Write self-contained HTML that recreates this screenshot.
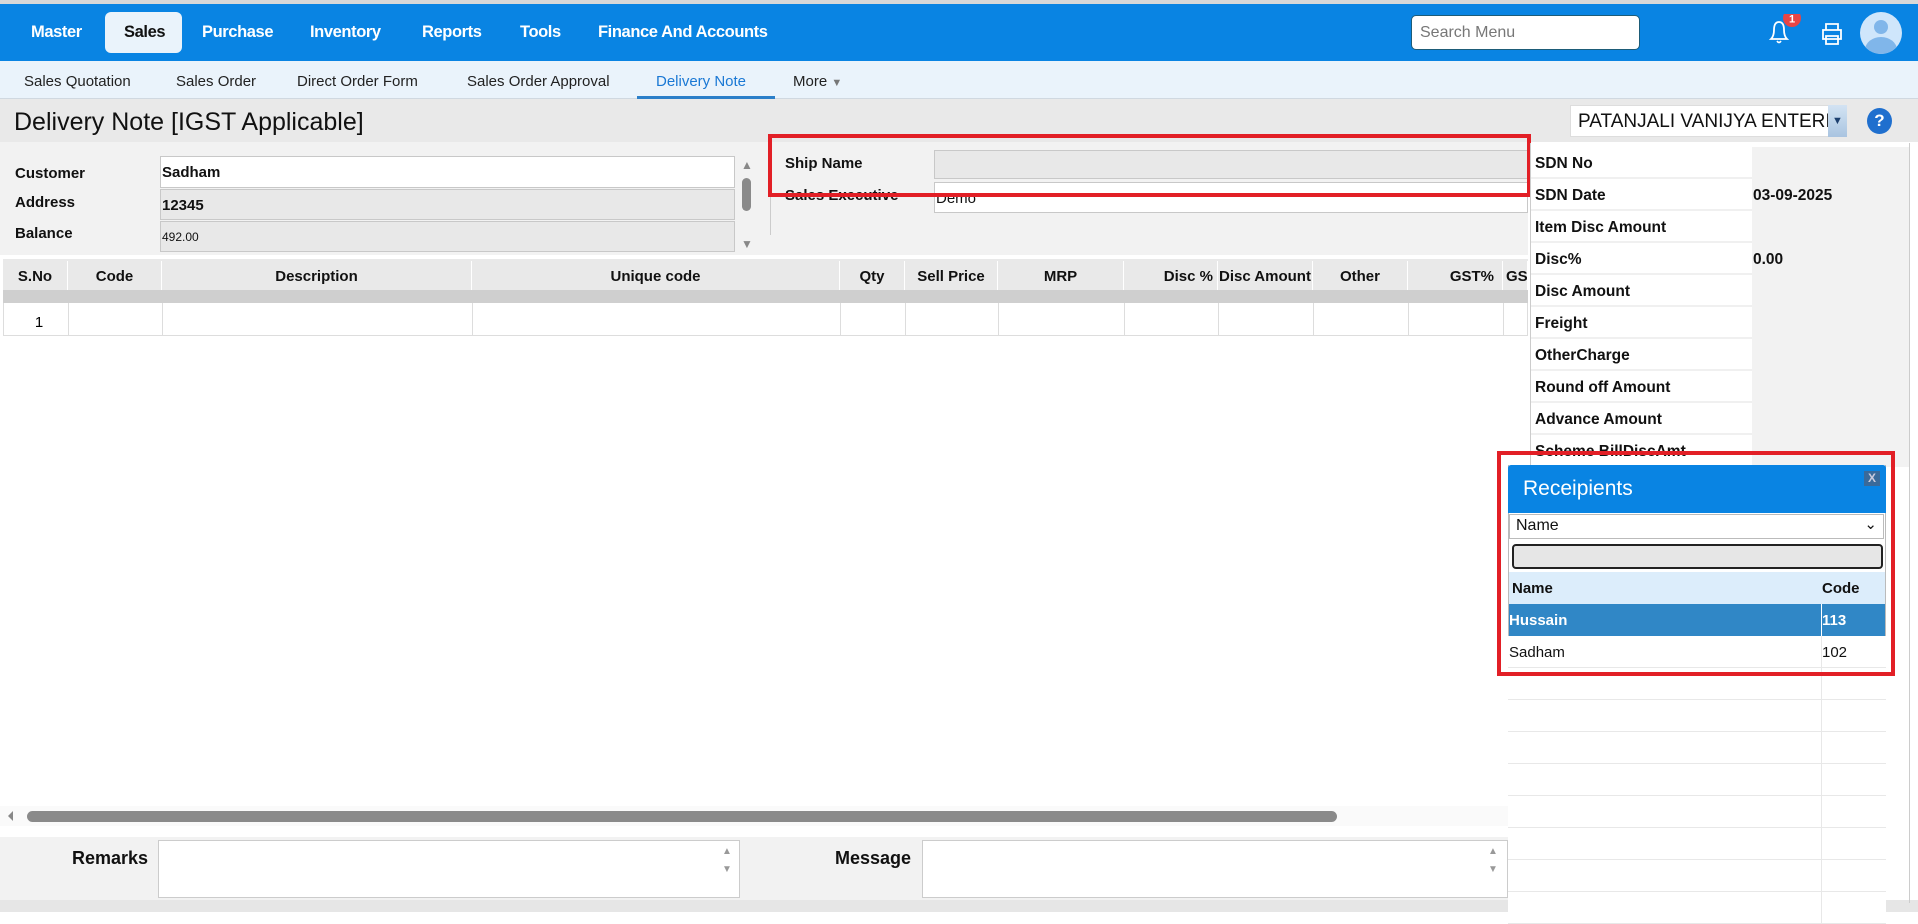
<!DOCTYPE html>
<html><head><meta charset="utf-8"><style>
*{box-sizing:border-box;margin:0;padding:0}
body{width:1918px;height:912px;overflow:hidden;background:#fff;font-family:"Liberation Sans",sans-serif;color:#111;position:relative}
.a{position:absolute}
.nav{left:0;top:0;width:1918px;height:61px;background:#0984e3;border-top:4px solid #d8d8d8}
.nv{top:23px;color:#fff;font-weight:bold;font-size:16.5px;letter-spacing:-0.4px}
.sub{left:0;top:61px;width:1918px;height:38px;background:#eaf3fb;border-bottom:1px solid #d0d8e0}
.sb{top:73px;font-size:15px;color:#222}
.inp{border:1px solid #c8c8c8;background:#e8e8e8;font-size:15px;font-weight:bold;padding-left:1px;line-height:31px}
.lbl{font-size:15px;font-weight:bold}
.th{top:261px;height:31px;font-size:15px;font-weight:bold;line-height:31px;text-align:center;border-right:1px solid #fff}
.rp{left:1531px;width:378px;height:32px;border-bottom:2px solid #f0f0f0}
.rp b{position:absolute;left:4px;top:8px;font-size:15.5px}
.rp i{position:absolute;left:221px;top:0;width:157px;height:32px;background:#f2f2f2;font-style:normal;font-weight:bold;font-size:15.5px;padding:8px 0 0 1px}
.pr{left:1508px;width:378px;height:32px;border-bottom:1px solid #e8e8e8;background:#fff}
.pr:after{content:"";position:absolute;left:313px;top:0;width:1px;height:32px;background:#e8e8e8}
</style></head><body>
<div class="a nav"></div>
<div class="a" style="left:105px;top:12px;width:77px;height:41px;background:#eaf3fb;border-radius:6px"></div>
<div class="a nv" style="left:31px">Master</div>
<div class="a nv" style="left:124px;color:#111">Sales</div>
<div class="a nv" style="left:202px">Purchase</div>
<div class="a nv" style="left:310px">Inventory</div>
<div class="a nv" style="left:422px">Reports</div>
<div class="a nv" style="left:520px">Tools</div>
<div class="a nv" style="left:598px">Finance And Accounts</div>
<div class="a" style="left:1411px;top:15px;width:229px;height:35px;background:#fff;border:1px solid #1d5c78;border-radius:5px;font-size:16px;color:#777;padding:8px 0 0 8px">Search Menu</div>
<svg class="a" style="left:1766px;top:14px" width="40" height="34" viewBox="0 0 40 34"><path d="M5 25 Q8 22 8 16 Q8 8 13 8 Q18 8 18 16 Q18 22 21 25 Z" fill="none" stroke="#fff" stroke-width="1.8"/><path d="M11 27 Q13 30 15 27" fill="none" stroke="#fff" stroke-width="1.6"/><circle cx="26" cy="4" r="9" fill="#e84545"/><text x="26" y="8.5" font-size="11" font-weight="bold" fill="#fff" text-anchor="middle" font-family="Liberation Sans">1</text></svg>
<svg class="a" style="left:1820px;top:22px" width="24" height="24" viewBox="0 0 24 24" fill="none" stroke="#fff" stroke-width="1.8"><path d="M6 8V2h12v6M3 8h18v9H3zM6 14h12v8H6z"/></svg>
<div class="a" style="left:1860px;top:12px;width:42px;height:42px;border-radius:50%;background:#cfe6fb;overflow:hidden"><div class="a" style="left:14px;top:8px;width:14px;height:14px;border-radius:50%;background:#80b6ea"></div><div class="a" style="left:5px;top:25px;width:32px;height:26px;border-radius:50%;background:#80b6ea"></div></div>

<div class="a sub"></div>
<div class="a sb" style="left:24px">Sales Quotation</div>
<div class="a sb" style="left:176px">Sales Order</div>
<div class="a sb" style="left:297px">Direct Order Form</div>
<div class="a sb" style="left:467px">Sales Order Approval</div>
<div class="a sb" style="left:656px;color:#1a78d4">Delivery Note</div>
<div class="a" style="left:637px;top:96px;width:138px;height:3px;background:#2b7fc9"></div>
<div class="a sb" style="left:793px">More <span style="font-size:11px;color:#777">▼</span></div>

<div class="a" style="left:0;top:99px;width:1918px;height:43px;background:#e9e9e9"></div>
<div class="a" style="left:14px;top:108px;font-size:25px">Delivery Note [IGST Applicable]</div>
<div class="a" style="left:1570px;top:105px;width:277px;height:32px;background:#fff;border:1px solid #ddd;font-size:19px;padding:5px 0 0 7px;overflow:hidden;white-space:nowrap">PATANJALI VANIJYA ENTERI</div>
<div class="a" style="left:1828px;top:105px;width:19px;height:32px;background:linear-gradient(#d3e3f3,#a9c4e0);color:#1c3f6e;font-size:11px;text-align:center;padding-top:10px">▼</div>
<div class="a" style="left:1867px;top:108px;width:25px;height:26px;border-radius:50%;background:#1f6fce;color:#fff;font-weight:bold;font-size:17px;text-align:center;line-height:26px">?</div>

<div class="a" style="left:0;top:142px;width:1528px;height:113px;background:#f2f2f2"></div>
<div class="a lbl" style="left:15px;top:165px">Customer</div>
<div class="a lbl" style="left:15px;top:194px">Address</div>
<div class="a lbl" style="left:15px;top:225px">Balance</div>
<div class="a inp" style="left:160px;top:156px;width:575px;height:32px;background:#fff">Sadham</div>
<div class="a inp" style="left:160px;top:189px;width:575px;height:31px">12345</div>
<div class="a inp" style="left:160px;top:221px;width:575px;height:31px;font-size:12px;font-weight:normal">492.00</div>
<div class="a" style="left:741px;top:158px;color:#888;font-size:12px">▲</div>
<div class="a" style="left:742px;top:178px;width:9px;height:33px;background:#8a8a8a;border-radius:5px"></div>
<div class="a" style="left:741px;top:237px;color:#888;font-size:12px">▼</div>
<div class="a" style="left:770px;top:160px;width:1px;height:75px;background:#ccc"></div>
<div class="a lbl" style="left:785px;top:155px">Ship Name</div>
<div class="a lbl" style="left:785px;top:187px">Sales Executive</div>
<div class="a inp" style="left:934px;top:150px;width:594px;height:29px"></div>
<div class="a inp" style="left:934px;top:182px;width:594px;height:31px;background:#fff;font-weight:normal">Demo</div>
<div class="a" style="left:768px;top:134px;width:763px;height:63px;border:4px solid #e21f26"></div>

<div class="a" style="left:3px;top:259px;width:1525px;height:31px;background:#e9e9e9"></div>
<div class="a th" style="left:3px;width:65px">S.No</div>
<div class="a th" style="left:68px;width:94px">Code</div>
<div class="a th" style="left:162px;width:310px">Description</div>
<div class="a th" style="left:472px;width:368px">Unique code</div>
<div class="a th" style="left:840px;width:65px">Qty</div>
<div class="a th" style="left:905px;width:93px">Sell Price</div>
<div class="a th" style="left:998px;width:126px">MRP</div>
<div class="a th" style="left:1124px;width:94px;text-align:right;padding-right:4px">Disc %</div>
<div class="a th" style="left:1218px;width:95px">Disc Amount</div>
<div class="a th" style="left:1313px;width:95px">Other</div>
<div class="a th" style="left:1408px;width:95px;text-align:right;padding-right:8px">GST%</div>
<div class="a th" style="left:1503px;width:25px;overflow:hidden;text-align:left;padding-left:3px">GST</div>
<div class="a" style="left:3px;top:290px;width:1525px;height:13px;background:#cfcfcf"></div>
<div class="a" style="left:3px;top:303px;width:1525px;height:33px;border:1px solid #ddd;border-top:none"></div>
<svg class="a" style="left:3px;top:303px" width="1525" height="33"><g stroke="#ddd"><line x1="65.5" y1="0" x2="65.5" y2="33"/><line x1="159.5" y1="0" x2="159.5" y2="33"/><line x1="469.5" y1="0" x2="469.5" y2="33"/><line x1="837.5" y1="0" x2="837.5" y2="33"/><line x1="902.5" y1="0" x2="902.5" y2="33"/><line x1="995.5" y1="0" x2="995.5" y2="33"/><line x1="1121.5" y1="0" x2="1121.5" y2="33"/><line x1="1215.5" y1="0" x2="1215.5" y2="33"/><line x1="1310.5" y1="0" x2="1310.5" y2="33"/><line x1="1405.5" y1="0" x2="1405.5" y2="33"/><line x1="1500.5" y1="0" x2="1500.5" y2="33"/></g><text x="36" y="24" font-size="15" text-anchor="middle" font-family="Liberation Sans">1</text></svg>

<div class="a" style="left:0;top:806px;width:1510px;height:20px;background:#fafafa"></div>
<div class="a" style="left:8px;top:811px;width:0;height:0;border-top:5px solid transparent;border-bottom:5px solid transparent;border-right:5px solid #888"></div>
<div class="a" style="left:27px;top:811px;width:1310px;height:11px;background:#8a8a8a;border-radius:6px"></div>

<div class="a" style="left:0;top:837px;width:1508px;height:63px;background:#f2f2f2"></div>
<div class="a" style="left:0;top:900px;width:1918px;height:12px;background:#e6e6e6"></div>
<div class="a lbl" style="left:72px;top:848px;font-size:18px">Remarks</div>
<div class="a" style="left:158px;top:840px;width:582px;height:58px;background:#fff;border:1px solid #ccc"></div>
<div class="a" style="left:722px;top:843px;color:#999;font-size:10px;line-height:18px">▲<br>▼</div>
<div class="a lbl" style="left:835px;top:848px;font-size:18px">Message</div>
<div class="a" style="left:922px;top:840px;width:586px;height:58px;background:#fff;border:1px solid #ccc"></div>
<div class="a" style="left:1488px;top:843px;color:#999;font-size:10px;line-height:18px">▲<br>▼</div>

<div class="a" style="left:1530px;top:143px;width:1px;height:770px;background:#ccc"></div>
<div class="a" style="left:1909px;top:143px;width:1px;height:760px;background:#ccc"></div>
<div class="a rp" style="top:147px"><b>SDN No</b><i></i></div>
<div class="a rp" style="top:179px"><b>SDN Date</b><i>03-09-2025</i></div>
<div class="a rp" style="top:211px"><b>Item Disc Amount</b><i></i></div>
<div class="a rp" style="top:243px"><b>Disc%</b><i>0.00</i></div>
<div class="a rp" style="top:275px"><b>Disc Amount</b><i></i></div>
<div class="a rp" style="top:307px"><b>Freight</b><i></i></div>
<div class="a rp" style="top:339px"><b>OtherCharge</b><i></i></div>
<div class="a rp" style="top:371px"><b>Round off Amount</b><i></i></div>
<div class="a rp" style="top:403px"><b>Advance Amount</b><i></i></div>
<div class="a rp" style="top:435px"><b>Scheme BillDiscAmt</b><i></i></div>

<div class="a" style="left:1508px;top:465px;width:378px;height:447px;background:#fff;border-left:1px solid #bbb;border-right:1px solid #bbb"></div>
<div class="a" style="left:1508px;top:465px;width:378px;height:48px;background:#0984e3;border-radius:3px 3px 0 0"></div>
<div class="a" style="left:1523px;top:477px;color:#fff;font-size:21px">Receipients</div>
<div class="a" style="left:1864px;top:471px;width:16px;height:15px;background:#3a6a9a;color:#ccd;font-size:12px;font-weight:bold;text-align:center;line-height:15px">X</div>
<div class="a" style="left:1509px;top:514px;width:375px;height:25px;border:1px solid #bbb;background:#fff;font-size:16px;padding:2px 0 0 6px">Name<span style="position:absolute;right:6px;top:0;font-size:15px">&#8964;</span></div>
<div class="a" style="left:1512px;top:544px;width:371px;height:25px;background:#e6e6e6;border:2px solid #222;border-radius:4px"></div>
<div class="a" style="left:1509px;top:572px;width:376px;height:32px;background:#dcedfb"></div>
<div class="a lbl" style="left:1512px;top:580px">Name</div>
<div class="a lbl" style="left:1822px;top:580px">Code</div>
<div class="a" style="left:1509px;top:604px;width:376px;height:32px;background:#3087c6"></div>
<div class="a" style="left:1821px;top:604px;width:1px;height:32px;background:#fff"></div>
<div class="a lbl" style="left:1509px;top:612px;color:#fff">Hussain</div>
<div class="a lbl" style="left:1822px;top:612px;color:#fff">113</div>
<div class="a pr" style="top:636px"></div>
<div class="a" style="left:1509px;top:644px;font-size:15px">Sadham</div>
<div class="a" style="left:1822px;top:644px;font-size:15px">102</div>
<div class="a pr" style="top:668px"></div><div class="a pr" style="top:700px"></div><div class="a pr" style="top:732px"></div><div class="a pr" style="top:764px"></div><div class="a pr" style="top:796px"></div><div class="a pr" style="top:828px"></div><div class="a pr" style="top:860px"></div><div class="a pr" style="top:892px"></div>
<div class="a" style="left:1497px;top:451px;width:398px;height:225px;border:4px solid #e21f26"></div>
</body></html>
